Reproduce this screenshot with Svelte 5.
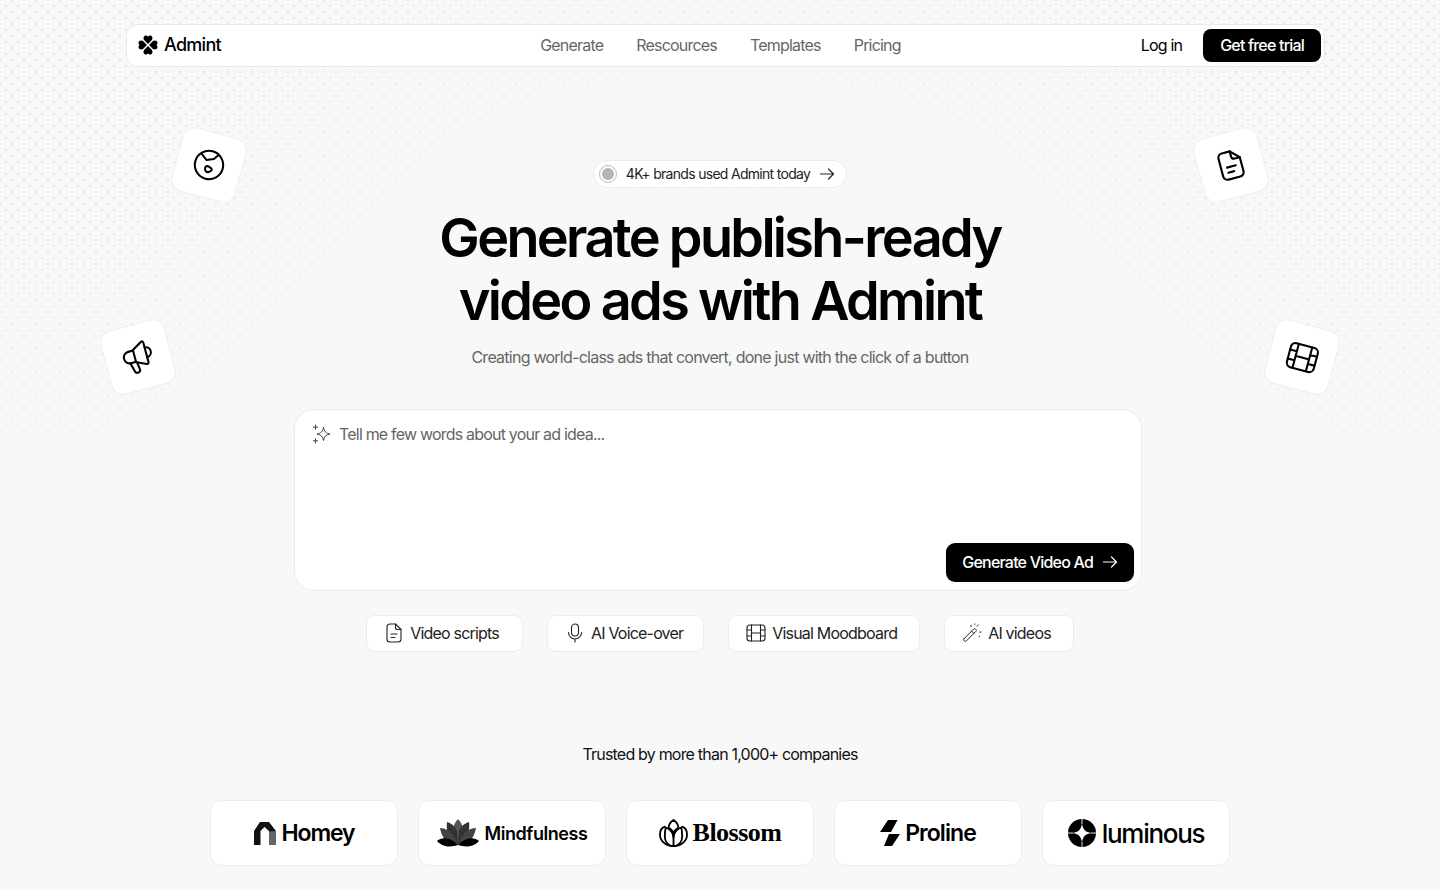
<script lang="ts">
  const links = ['Generate', 'Rescources', 'Templates', 'Pricing'];
  const heart = 'M10 8.900 6.300 5.300C4.900 3.800 5.400.700 7.700.500 8.800.400 9.600 1 10 1.800 10.400 1 11.200.400 12.300.500 14.600.700 15.100 3.800 13.700 5.300Z';
</script>

{#snippet doc()}
  <path d="M13.500 3H8a3 3 0 0 0-3 3v12a3 3 0 0 0 3 3h8a3 3 0 0 0 3-3V8.500Z" />
  <path d="M13.500 3v3.500a2 2 0 0 0 2 2H19" />
  <path d="M9 13h6M9 16.500h4" />
{/snippet}

{#snippet film()}
  <rect x="3" y="4" width="18" height="16" rx="3" />
  <path d="M7.500 4v16M16.500 4v16M3 9h4.500M3 15h4.500M16.500 9H21M16.500 15H21M7.500 12h9" />
{/snippet}

{#snippet arrow()}
  <svg class="arrow" viewBox="0 0 16 16" width="16" height="16" aria-hidden="true">
    <path d="M1.500 8h13M9.500 3l5 5-5 5" />
  </svg>
{/snippet}

<div class="page">
  <div class="dots"></div>

  <nav class="nav">
    <a class="brand" href="#top">
      <svg viewBox="0 0 20 20" width="20" height="20" aria-hidden="true">
        {#each [0, 90, 180, 270] as angle}
          <path d={heart} transform="rotate({angle} 10 10)" />
        {/each}
      </svg>
      Admint
    </a>
    <div class="links">
      {#each links as link}
        <a href="#top">{link}</a>
      {/each}
    </div>
    <div class="actions">
      <a class="login" href="#top">Log in</a>
      <button class="dark trial">Get free trial</button>
    </div>
  </nav>

  <main class="hero">
    <div class="float f-earth">
      <svg class="ic" viewBox="0 0 24 24" width="34" height="34" aria-hidden="true">
        <circle cx="12" cy="12" r="10" />
        <path d="M4.800 5.600 9.300 9l4.900-2 2.400-3.400" />
        <path d="M9.900 14.600c0-1.100.9-1.800 2-1.500l2 .7c1.100.4 1.100 1.500.3 2.100l-1.200.9c-1.200.8-3.100 0-3.100-2.200Z" />
      </svg>
    </div>
    <div class="float f-mega">
      <svg class="ic mega" viewBox="-0.600 0 24 24" width="40" height="40" aria-hidden="true">
        <path d="M9 7.500 15.500 3.600c.6-.3 1.200.1 1.200.8v12.200c0 .7-.6 1.100-1.200.8L9 14.500H6.500A3.500 3.500 0 0 1 6.500 7.500Z" />
        <path d="M9.500 7.500v7M16.700 7.500a3 3 0 0 1 0 6" />
        <path d="M6 14.500 7.400 20c.2.800 1 1.200 1.800 1.100h.2c.9-.2 1.500-1.100 1.200-2L10 15" />
      </svg>
    </div>
    <div class="float f-doc">
      <svg class="ic" viewBox="0 0 24 24" width="36" height="36" aria-hidden="true">{@render doc()}</svg>
    </div>
    <div class="float f-film">
      <svg class="ic film" viewBox="0 0 24 24" width="37" height="37" aria-hidden="true">{@render film()}</svg>
    </div>

    <a class="badge" href="#top">
      <span class="radio"><span></span></span>
      4K+ brands used Admint today
      {@render arrow()}
    </a>

    <h1>Generate publish-ready<br />video ads with Admint</h1>
    <p class="sub">Creating world-class ads that convert, done just with the click of a button</p>

    <div class="prompt">
      <div class="prompt-line">
        <svg class="thin" viewBox="0 0 20 20" width="20" height="20" aria-hidden="true">
          <path d="M11.500 3.500c.7 4 2.500 5.800 6.500 6.500-4 .7-5.800 2.500-6.500 6.500-.7-4-2.500-5.800-6.500-6.500 4-.7 5.800-2.500 6.500-6.500Z" />
          <path d="M3.500 1v4.400M1.300 3.200h4.400M3.500 14.600V19M1.300 16.800h4.400" />
        </svg>
        <span>Tell me few words about your ad idea...</span>
      </div>
      <button class="dark generate">Generate Video Ad {@render arrow()}</button>
    </div>

    <div class="chips">
      <div class="chip">
        <svg class="ic-s" viewBox="2 2 20 20" width="20" height="20" aria-hidden="true">{@render doc()}</svg>
        Video scripts
      </div>
      <div class="chip">
        <svg class="ic-s" viewBox="2 2 20 20" width="20" height="20" aria-hidden="true">
          <rect x="8.500" y="3" width="7" height="12" rx="3.500" />
          <path d="M5.500 11.500a6.500 6.500 0 0 0 13 0M12 18v3" />
        </svg>
        AI Voice-over
      </div>
      <div class="chip">
        <svg class="ic-s" viewBox="2 2 20 20" width="20" height="20" aria-hidden="true">{@render film()}</svg>
        Visual Moodboard
      </div>
      <div class="chip">
        <svg class="ic-s" viewBox="1 1 22 22" width="20" height="20" aria-hidden="true">
          <path d="M3.200 18.300 13.800 7.700a1.500 1.500 0 0 1 2.100 0l.4.400a1.500 1.500 0 0 1 0 2.100L5.700 20.800a1.500 1.500 0 0 1-2.100 0l-.4-.4a1.500 1.500 0 0 1 0-2.100ZM11.500 10l2.500 2.500" />
          <path d="M11 3.500v1.500M19 3l-1.500 1.500M20.500 11H22M20 15.500v.5M15 2v.5" />
        </svg>
        AI videos
      </div>
    </div>

    <p class="trusted">Trusted by more than 1,000+ companies</p>

    <div class="logos">
      <div class="logo homey">
        <svg viewBox="0 0 22 23" width="22" height="23" aria-hidden="true">
          <path d="M0 9 6 0h9l7 9v14h-7V9l-4.500-4L6.500 9v14H0Z" fill="#111" />
          <path d="M15 9.500 22 9v14h-7Z" fill="#666" />
        </svg>
        <span>Homey</span>
      </div>
      <div class="logo mindful">
        <svg viewBox="0 0 42 28" width="42" height="28" aria-hidden="true">
          <path d="M21 0c3 3 5 7 5 12l-5 14-5-14c0-5 2-9 5-12Z" fill="#555" />
          <path d="M10 3c4 1 8 4 10 9l1 14-6-3C11 18 9 10 10 3ZM32 3c-4 1-8 4-10 9l-1 14 6-3c4-5 6-13 5-20Z" fill="#333" />
          <path d="M3 9c5 0 11 3 14 9l4 8H14C8 22 4 16 3 9ZM39 9c-5 0-11 3-14 9l-4 8h7c6-4 10-10 11-17Z" fill="#444" />
          <path d="M0 22c5-4 13-4 21 4-6 2-15 3-21-4ZM42 22c-5-4-13-4-21 4 6 2 15 3 21-4Z" fill="#000" />
        </svg>
        <span>Mindfulness</span>
      </div>
      <div class="logo blossom">
        <svg class="outline" viewBox="0 0 30 30" width="29" height="29" aria-hidden="true">
          <path d="M15 1c3 2 5 5 5 8-2 1-4 3-5 5-1-2-3-4-5-5 0-3 2-6 5-8Z" />
          <path d="M15 28c-6 0-9-5-9-10 0-3 0-6 1-9 4 1 8 5 8 10 0-5 4-9 8-10 1 3 1 6 1 9 0 5-3 10-9 10Z" />
          <path d="M6 8C3 9 1 12 1 16c0 6 5 12 14 12 9 0 14-6 14-12 0-4-2-7-5-8M15 14v14" />
        </svg>
        <span>Blossom</span>
      </div>
      <div class="logo proline">
        <svg viewBox="0 0 20 26" width="20" height="26" aria-hidden="true">
          <path d="M8 0h9.500L11 12H0ZM9 14h11l-8 12H4Z" fill="#000" />
        </svg>
        <span>Proline</span>
      </div>
      <div class="logo luminous">
        <svg viewBox="0 0 28 28" width="28" height="28" aria-hidden="true">
          <circle cx="14" cy="14" r="14" fill="#000" />
          <path d="M14 4.500c1.100 6.300 3.200 8.400 9.500 9.500-6.300 1.100-8.400 3.200-9.500 9.500-1.100-6.300-3.200-8.400-9.500-9.500 6.300-1.100 8.400-3.200 9.500-9.500Z" fill="#fff" />
          <path d="M14 0v5M14 23v5M0 14h5M23 14h5" stroke="#fff" stroke-width=".9" />
        </svg>
        <span>luminous</span>
      </div>
    </div>
  </main>
</div>

<style>
  :global(body) {
    margin: 0;
    background: #f8f8f8;
    font-family: Inter, 'Liberation Sans', sans-serif;
    color: #000;
  }

  a {
    color: inherit;
    text-decoration: none;
  }

  .page {
    position: relative;
    height: 890px;
    overflow: hidden;
    padding-top: 24px;
    box-sizing: border-box;
    letter-spacing: -0.05em;
  }

  .dots {
    position: absolute;
    inset: 0;
    background-image:
      radial-gradient(circle, #e3e3e3 1.1px, transparent 1.5px),
      radial-gradient(circle, #e3e3e3 1.1px, transparent 1.5px);
    background-size: 12px 12px;
    background-position: 0 0, 6px 6px;
    -webkit-mask-image: radial-gradient(ellipse 640px 420px at 720px 330px, rgba(0, 0, 0, 0.15) 45%, #000 100%),
      linear-gradient(#000 25%, transparent 65%);
    -webkit-mask-composite: source-in;
    mask-image: radial-gradient(ellipse 640px 420px at 720px 330px, rgba(0, 0, 0, 0.15) 45%, #000 100%),
      linear-gradient(#000 25%, transparent 65%);
    mask-composite: intersect;
  }

  .nav {
    position: relative;
    display: grid;
    grid-template-columns: 1fr auto 1fr;
    align-items: center;
    width: 1199px;
    height: 43px;
    margin-left: 126px;
    padding: 0 3px 0 11px;
    box-sizing: border-box;
    background: #fff;
    border: 1px solid #e9e9e9;
    border-radius: 12px;
  }

  .brand {
    display: flex;
    align-items: center;
    gap: 6px;
    font-size: 18px;
    font-weight: 500;
    letter-spacing: -0.04em;
    position: relative;
    top: -1px;
  }

  .links {
    display: flex;
    gap: 33px;
    margin-left: -18px;
    font-size: 16px;
    line-height: 20px;
    position: relative;
    top: -1px;
    color: #666;
  }

  .actions {
    display: flex;
    align-items: center;
    justify-content: flex-end;
    gap: 21px;
    font-size: 16px;
  }

  .login {
    position: relative;
    top: -1px;
  }

  .dark {
    display: inline-flex;
    align-items: center;
    border: 0;
    background: #000;
    color: #fff;
    font-family: inherit;
    font-size: 16px;
    font-weight: 500;
    letter-spacing: -0.05em;
  }

  .trial {
    height: 33px;
    padding: 0 17px 2px 17px;
    border-radius: 8px;
  }

  .hero {
    position: relative;
    display: flex;
    flex-direction: column;
    align-items: center;
    padding-top: 93px;
  }

  .float {
    position: absolute;
    display: flex;
    align-items: center;
    justify-content: center;
    width: 64px;
    height: 64px;
    background: #fff;
    border: 1px solid #efefef;
    border-radius: 12px;
  }

  .f-earth { left: 176px; top: 65px; transform: rotate(15deg); }
  .f-mega { left: 105px; top: 257px; transform: rotate(-15deg); }
  .f-doc { left: 1198px; top: 65px; transform: rotate(-15deg); }
  .f-film { left: 1269px; top: 257px; transform: rotate(15deg); }

  .ic, .ic-s, .outline, .thin, .arrow {
    fill: none;
    stroke: currentColor;
    stroke-linecap: round;
    stroke-linejoin: round;
  }

  .ic { stroke-width: 1.45; }
  .ic.mega { stroke-width: 1.25; }
  .ic.film { stroke-width: 1.35; }
  .ic-s { stroke-width: 1.1; color: #222; }
  .thin { stroke-width: 1; color: #444; }
  .arrow { stroke-width: 1.2; }

  .badge {
    display: flex;
    align-items: center;
    gap: 9px;
    height: 25px;
    padding: 0 11px 1px 5px;
    background: #fff;
    border: 1px solid #ececec;
    border-radius: 14px;
    font-size: 14px;
    letter-spacing: -0.05em;
    color: #222;
  }

  .radio {
    display: flex;
    align-items: center;
    justify-content: center;
    width: 16px;
    height: 16px;
    border: 1px solid #bbb;
    border-radius: 50%;
  }

  .radio span {
    width: 12px;
    height: 12px;
    border-radius: 50%;
    background: #b4b4b4;
  }

  h1 {
    margin: 18px 0 0;
    font-size: 54px;
    line-height: 63px;
    font-weight: 600;
    letter-spacing: -2.65px;
    text-align: center;
    color: #000;
  }

  .sub {
    margin: 13px 0 0;
    font-size: 16px;
    line-height: 24px;
    letter-spacing: -0.047em;
    color: #666;
  }

  .prompt {
    display: flex;
    flex-direction: column;
    justify-content: space-between;
    align-items: flex-end;
    width: 848px;
    height: 182px;
    margin: 40px 0 0 -4px;
    padding: 13px 7px 8px 17px;
    box-sizing: border-box;
    background: #fff;
    border: 1px solid #ebebeb;
    border-radius: 20px;
  }

  .prompt-line {
    display: flex;
    align-items: center;
    gap: 7px;
    align-self: flex-start;
    font-size: 16px;
    line-height: 22px;
    color: #666;
  }

  .generate {
    gap: 9px;
    height: 39px;
    padding: 0 16px 2px;
    border-radius: 9px;
  }

  .chips {
    display: flex;
    gap: 24px;
    margin-top: 24px;
    font-size: 16px;
    color: #222;
  }

  .chip {
    display: flex;
    align-items: center;
    gap: 6px;
    height: 37px;
    padding: 0 22px 1px 17px;
    box-sizing: border-box;
    background: #fff;
    border: 1px solid #ececec;
    border-radius: 9px;
  }

  .chip:first-child { padding-right: 23px; }
  .chip:nth-child(2) { padding-right: 20px; }

  .trusted {
    margin: 90px 0 0;
    font-size: 16px;
    line-height: 24px;
    color: #111;
  }

  .logos {
    display: flex;
    gap: 20px;
    margin-top: 34px;
  }

  .logo {
    display: flex;
    align-items: center;
    justify-content: center;
    gap: 5px;
    width: 188px;
    height: 66px;
    box-sizing: border-box;
    background: #fff;
    border: 1px solid #ececec;
    border-radius: 12px;
    color: #000;
  }

  .logo span {
    font-family: Inter, sans-serif;
    font-weight: 600;
  }

  .homey { gap: 6px; }
  .homey span { font-size: 23px; letter-spacing: -0.05em; }
  .mindful { gap: 6px; }
  .mindful span { font-size: 18px; letter-spacing: -0.025em; }
  .blossom span { font-family: 'Liberation Serif', serif; font-weight: 700; font-size: 26px; letter-spacing: -0.02em; }
  .proline span { font-size: 23px; letter-spacing: -0.04em; }
  .luminous { gap: 6px; }
  .luminous span { font-weight: 500; font-size: 26px; letter-spacing: -0.05em; }
  .outline { stroke-width: 1.9; color: #000; }
</style>
